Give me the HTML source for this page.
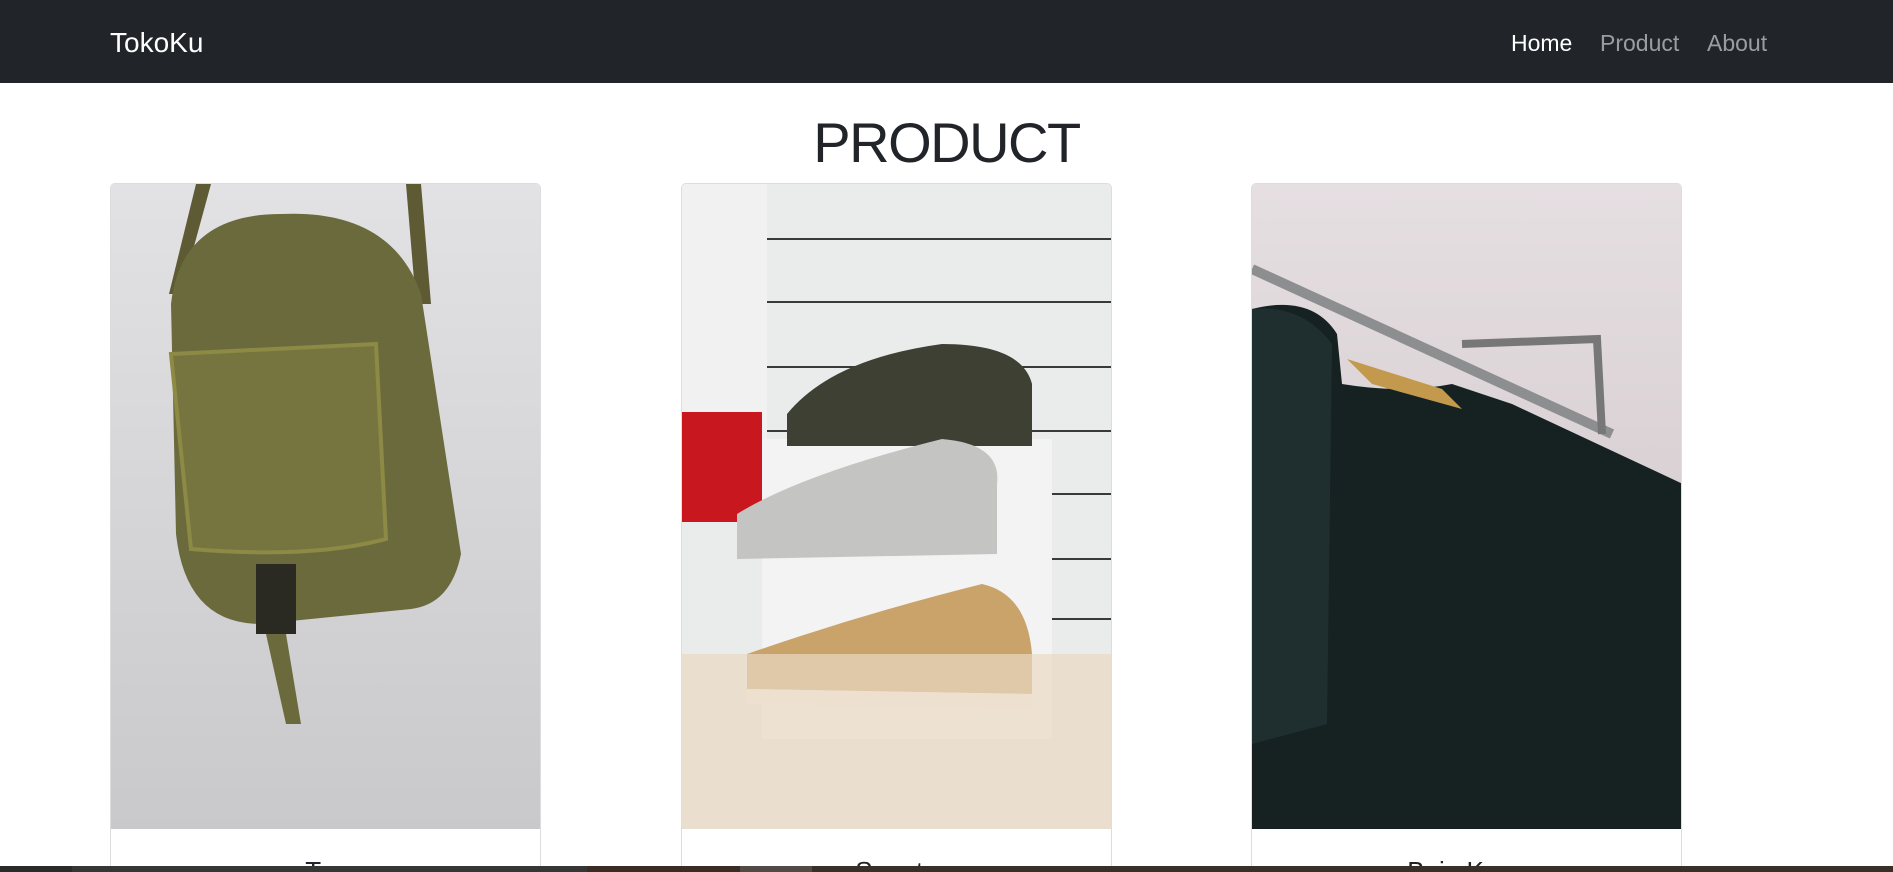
<!DOCTYPE html>
<html><head><meta charset="utf-8"><style>
*{margin:0;padding:0;box-sizing:border-box}
html,body{width:1893px;height:872px;overflow:hidden}
body{background:#fff;font-family:"Liberation Sans","DejaVu Sans",sans-serif;position:relative}
.nav{position:absolute;left:0;top:0;width:1893px;height:83px;background:#212529}
.brand{position:absolute;left:110px;top:27px;font-size:28px;color:#fff}
.nl{position:absolute;top:30px;font-size:23px;color:rgba(255,255,255,.55)}
h1{position:absolute;left:0;width:1893px;top:110px;text-align:center;font-weight:400;font-size:56px;letter-spacing:-1.5px;color:#212529}
.card{position:absolute;top:183px;width:431px;height:689px;border:1px solid #ddd;border-bottom:none;border-radius:5px 5px 0 0;overflow:hidden;background:#fff}
.card svg{display:block}
.t{position:absolute;top:672px;width:100%;text-align:center;font-size:26px;color:#212529}
.bar{position:absolute;left:0;top:866px;height:6px;z-index:5}
</style></head><body>
<div class="nav"><div class="brand">TokoKu</div>
<div class="nl" style="left:1511px;color:#fff">Home</div>
<div class="nl" style="left:1600px">Product</div>
<div class="nl" style="left:1707px">About</div></div>
<h1>PRODUCT</h1>

<div class="card" style="left:110px"><svg width="431" height="645">
<defs><linearGradient id="g1" x1="0" y1="0" x2="0" y2="1"><stop offset="0" stop-color="#e2e2e4"/><stop offset="1" stop-color="#c9c9cb"/></linearGradient></defs>
<rect width="431" height="645" fill="url(#g1)"/>
<path d="M85 0 L100 0 L70 110 L58 110Z" fill="#5d5a34"/>
<path d="M295 0 L310 0 L320 120 L305 120Z" fill="#5d5a34"/>
<path d="M60 120 Q70 30 170 30 Q280 25 310 110 L350 370 Q340 420 300 425 L150 440 Q75 440 65 350Z" fill="#6b6a3c"/>
<path d="M60 170 L265 160 L275 355 Q200 375 80 365Z" fill="#77753f" stroke="#8d8a45" stroke-width="4"/>
<rect x="145" y="380" width="40" height="70" fill="#2a2a22"/>
<path d="M155 450 L175 450 L190 540 L175 540Z" fill="#6b6a3c"/>
</svg><div class="t">Tas</div></div>

<div class="card" style="left:681px"><svg width="431" height="645">
<rect width="431" height="645" fill="#e9eceb"/>
<rect x="0" y="0" width="85" height="330" fill="#f1f1f1"/>
<g stroke="#3c3a38" stroke-width="2"><line x1="85" y1="55" x2="431" y2="55"/><line x1="85" y1="118" x2="431" y2="118"/><line x1="85" y1="183" x2="431" y2="183"/><line x1="85" y1="247" x2="431" y2="247"/><line x1="85" y1="310" x2="431" y2="310"/><line x1="85" y1="375" x2="431" y2="375"/><line x1="85" y1="435" x2="431" y2="435"/></g>
<rect x="0" y="228" width="80" height="110" fill="#c8171f"/>
<rect x="80" y="255" width="290" height="300" fill="#f3f3f3"/>
<path d="M105 230 Q150 175 260 160 Q340 160 350 200 L350 262 L105 262Z" fill="#3e4033"/>
<path d="M55 330 Q120 290 260 255 Q320 260 315 300 L315 370 L55 375Z" fill="#c4c4c2"/>
<path d="M65 470 Q180 430 300 400 Q345 410 350 470 L350 510 L65 505Z" fill="#caa36b"/>
<path d="M65 505 L350 510 L350 525 L65 520Z" fill="#f4f1ea"/>
<rect x="0" y="470" width="431" height="175" fill="#ead9c3" opacity=".7"/>
</svg><div class="t">Sepatu</div></div>

<div class="card" style="left:1251px"><svg width="431" height="645">
<defs><linearGradient id="g3" x1="0" y1="0" x2="0" y2="1"><stop offset="0" stop-color="#e6dfe2"/><stop offset=".5" stop-color="#d8d0d2"/></linearGradient></defs>
<rect width="431" height="645" fill="url(#g3)"/>
<line x1="0" y1="85" x2="360" y2="250" stroke="#8d8e8f" stroke-width="10"/>
<path d="M210 160 L345 155 L350 250" fill="none" stroke="#777" stroke-width="8"/>
<path d="M0 125 Q60 110 85 150 L90 200 Q150 210 200 200 L260 220 L431 300 L431 645 L0 645Z" fill="#162122"/>
<path d="M95 175 L190 205 L210 225 L120 200Z" fill="#c39a4d"/>
<path d="M0 125 Q50 120 80 160 L75 540 L0 560Z" fill="#1f2f30"/>
</svg><div class="t">Baju Kaos</div></div>

<div class="bar" style="left:0;width:72px;background:#2a2a2b"></div>
<div class="bar" style="left:72px;width:515px;background:#363636"></div>
<div class="bar" style="left:587px;width:153px;background:#3a2c24"></div>
<div class="bar" style="left:740px;width:72px;background:#514a45"></div>
<div class="bar" style="left:812px;width:1081px;background:#3a2f28"></div>
</body></html>
